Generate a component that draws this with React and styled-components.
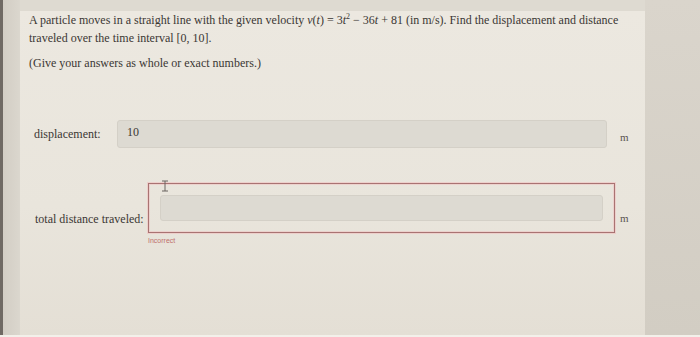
import styled, { createGlobalStyle } from 'styled-components';

const GlobalStyle = createGlobalStyle`
    body {
        margin: 0;
        background: #d5d0c6;
    }
`;

const Screen = styled.div`
    display: flex;
    width: 700px;
    height: 335px;
    overflow: hidden;
    border-bottom: 2px solid #f3f0ea;
    font-family: "Liberation Serif", "Times New Roman", serif;
    color: #3b3734;
`;

const Bezel = styled.div`
    width: 3px;
    background: #6f6963;
`;

const Gutter = styled.div`
    width: 17px;
    background: linear-gradient(90deg, #d2cdc4, #dbd7ce);
`;

const Main = styled.div`
    width: 625px;
    display: flex;
    flex-direction: column;
`;

const TopBand = styled.div`
    height: 11px;
    background: #dedad1;
`;

const Panel = styled.div`
    flex: 1;
    background: linear-gradient(180deg, #ece8e0 0%, #e9e5dc 60%, #e4dfd5 100%);
    padding: 0 0 0 9px;
`;

const Side = styled.div`
    flex: 1;
    background: linear-gradient(180deg, #dad5cc 0%, #d2cdc3 100%);
`;

const Question = styled.p`
    margin: 0;
    font-size: 12px;
    line-height: 18px;
    width: 600px;
`;

const Hint = styled.p`
    margin: 7px 0 0;
    font-size: 12px;
    line-height: 18px;
`;

const Var = styled.i`
    font-style: italic;
`;

const Sup = styled.sup`
    font-size: 8px;
    line-height: 0;
`;

const Row = styled.div`
    display: flex;
    align-items: ${(p) => (p.$end ? 'flex-end' : 'center')};
    margin-top: ${(p) => p.$top}px;
`;

const Label = styled.span`
    box-sizing: border-box;
    width: ${(p) => p.$width}px;
    padding-left: ${(p) => p.$pad}px;
    font-size: 12px;
    margin-bottom: ${(p) => p.$bottom || 0}px;
    flex-shrink: 0;
`;

const Input = styled.div`
    width: ${(p) => p.$width}px;
    height: ${(p) => p.$height}px;
    box-sizing: border-box;
    background: #dddad2;
    border: 1px solid #d4d0c7;
    border-radius: 3px;
    padding: 0 9px 3px;
    display: flex;
    align-items: center;
    font-size: 12px;
`;

const Unit = styled.span`
    font-size: 11px;
    color: #5a5550;
    margin-left: ${(p) => p.$gap}px;
    margin-top: ${(p) => p.$top || 0}px;
    margin-bottom: ${(p) => p.$bottom || 0}px;
`;

const Field = styled.div`
    display: flex;
    flex-direction: column;
`;

const ErrorBox = styled.div`
    position: relative;
    width: 467px;
    height: 50px;
    box-sizing: border-box;
    padding: 11px;
    border: 1px solid #a97372;
    box-shadow: 0 0 0 1px rgba(240, 190, 190, 0.55), inset 0 0 0 1px rgba(240, 190, 190, 0.5);
`;

const Cursor = styled.svg`
    position: absolute;
    left: 10px;
    top: -4px;
`;

const Feedback = styled.span`
    margin-top: 3px;
    font-family: "Liberation Sans", Arial, sans-serif;
    font-size: 7px;
    line-height: 9px;
    color: #c0706d;
`;

const App = () => {
    return (
        <>
            <GlobalStyle />
            <Screen>
                <Bezel />
                <Gutter />
                <Main>
                    <TopBand />
                    <Panel>
                        <Question>
                            A particle moves in a straight line with the given velocity <Var>v</Var>(<Var>t</Var>) = 3<Var>t</Var><Sup>2</Sup> − 36<Var>t</Var> + 81 (in m/s). Find the displacement and distance traveled over the time interval [0, 10].
                        </Question>
                        <Hint>(Give your answers as whole or exact numbers.)</Hint>

                        <Row $top={48}>
                            <Label $width={88} $pad={5}>displacement:</Label>
                            <Input $width={490} $height={28}>10</Input>
                            <Unit $gap={13} $top={6}>m</Unit>
                        </Row>

                        <Row $top={35} $end>
                            <Label $width={119} $pad={6} $bottom={18}>total distance traveled:</Label>
                            <Field>
                                <ErrorBox>
                                    <Cursor width="12" height="12" viewBox="0 0 12 12">
                                        <path d="M3 1h6M6 1v10M3 11h6" stroke="#6a6460" strokeWidth="1" fill="none" />
                                    </Cursor>
                                    <Input $width={443} $height={26} />
                                </ErrorBox>
                                <Feedback>Incorrect</Feedback>
                            </Field>
                            <Unit $gap={5} $bottom={21}>m</Unit>
                        </Row>
                    </Panel>
                </Main>
                <Side />
            </Screen>
        </>
    );
};

export default App;
